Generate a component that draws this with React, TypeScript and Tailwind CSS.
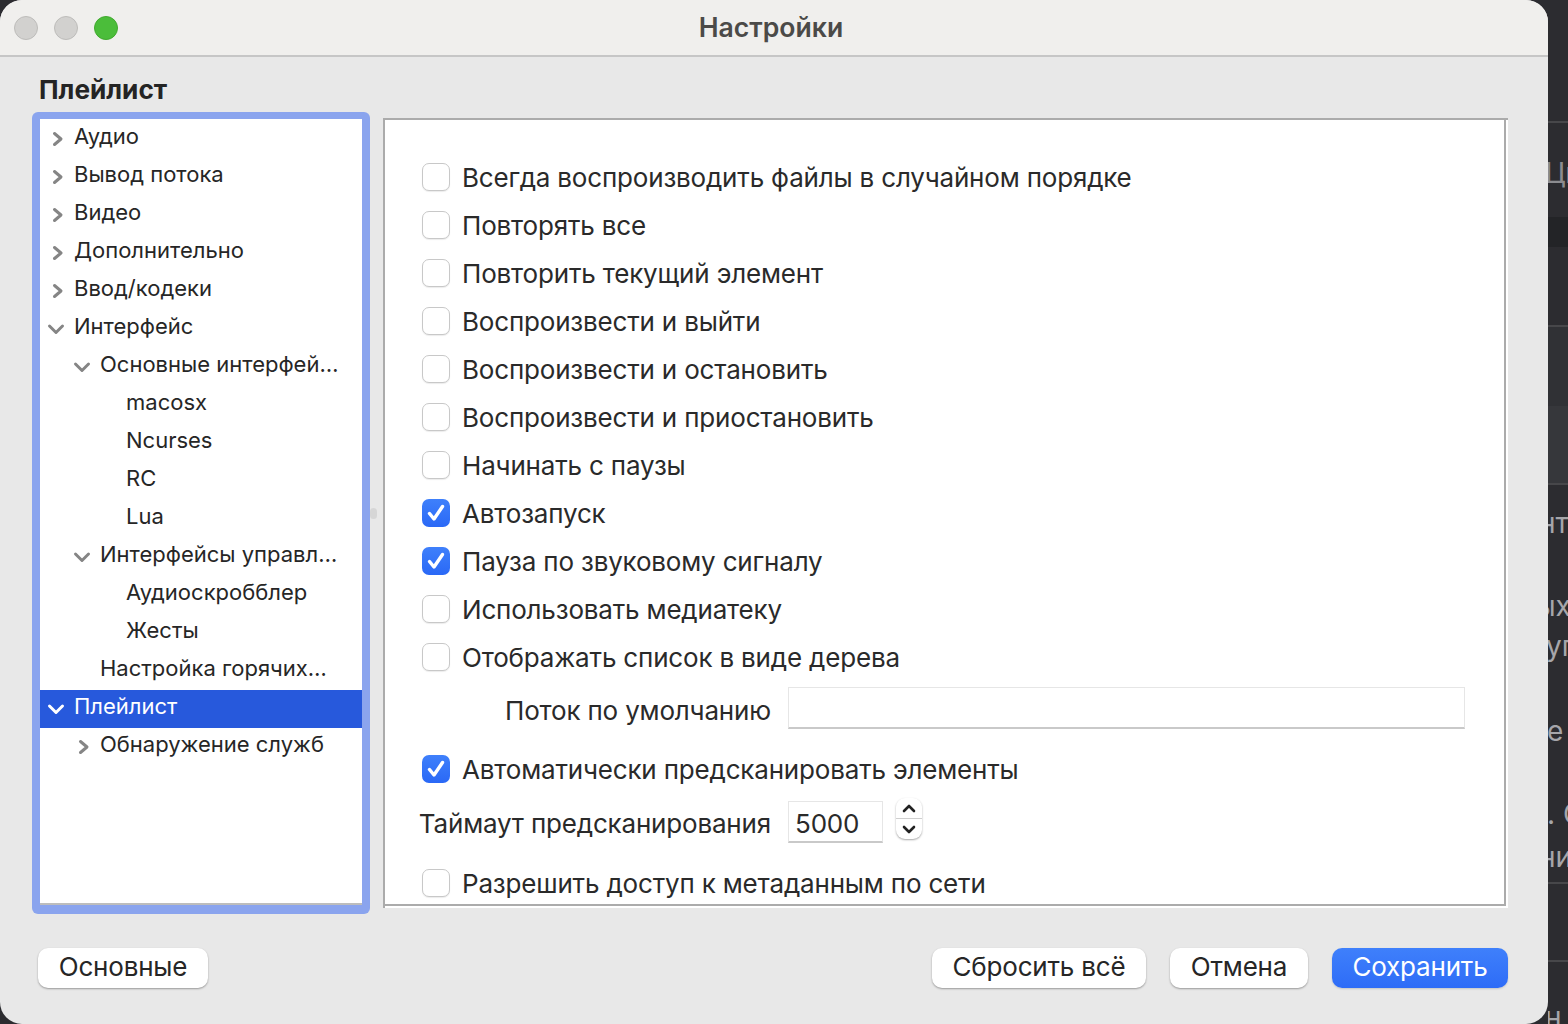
import React from "react";

function ChevronRight({ white = false }: { white?: boolean }) {
  return (
    <svg width="12" height="16" viewBox="0 0 12 16" fill="none" className="shrink-0">
      <path d="M2.5 2.5 L9 8 L2.5 13.5" stroke={white ? "#ffffff" : "#858585"} strokeWidth="3" strokeLinecap="round" strokeLinejoin="round" />
    </svg>
  );
}

function ChevronDown({ white = false }: { white?: boolean }) {
  return (
    <svg width="18" height="12" viewBox="0 0 18 12" fill="none" className="shrink-0">
      <path d="M2.5 3 L9 9.5 L15.5 3" stroke={white ? "#ffffff" : "#858585"} strokeWidth="3" strokeLinecap="round" strokeLinejoin="round" />
    </svg>
  );
}

type Row = { t: string; l: number; c?: "r" | "d"; sel?: boolean };
const rows: Row[] = [
  { t: "Аудио", l: 0, c: "r" },
  { t: "Вывод потока", l: 0, c: "r" },
  { t: "Видео", l: 0, c: "r" },
  { t: "Дополнительно", l: 0, c: "r" },
  { t: "Ввод/кодеки", l: 0, c: "r" },
  { t: "Интерфейс", l: 0, c: "d" },
  { t: "Основные интерфей…", l: 1, c: "d" },
  { t: "macosx", l: 2 },
  { t: "Ncurses", l: 2 },
  { t: "RC", l: 2 },
  { t: "Lua", l: 2 },
  { t: "Интерфейсы управл…", l: 1, c: "d" },
  { t: "Аудиоскробблер", l: 2 },
  { t: "Жесты", l: 2 },
  { t: "Настройка горячих…", l: 1 },
  { t: "Плейлист", l: 0, c: "d", sel: true },
  { t: "Обнаружение служб", l: 1, c: "r" },
];

function TreeRow({ r }: { r: Row }) {
  const pad = r.l === 0 ? "pl-0" : r.l === 1 ? "pl-[26px]" : "pl-[52px]";
  return (
    <div className={`h-[38px] flex items-center whitespace-nowrap ${pad} ${r.sel ? "bg-[#2759dc] text-white" : "text-[#262626]"}`}>
      <span className={`w-[34px] shrink-0 flex items-center ${r.c === "d" ? "pl-[7px]" : "pl-[12px]"}`}>
        {r.c === "r" && <ChevronRight white={r.sel} />}
        {r.c === "d" && <ChevronDown white={r.sel} />}
      </span>
      <span className="text-[22px] leading-[34px] pb-[6px]">{r.t}</span>
    </div>
  );
}

function Check({ on = false }: { on?: boolean }) {
  return on ? (
    <span className="w-[28px] h-[28px] rounded-[7px] shrink-0 bg-gradient-to-b from-[#3f80fb] to-[#2a68f6] flex items-center justify-center">
      <svg width="20" height="20" viewBox="0 0 20 20" fill="none">
        <path d="M3.5 10.5 L8 16 L16.5 3.5" stroke="#fff" strokeWidth="3.4" strokeLinecap="round" strokeLinejoin="round" />
      </svg>
    </span>
  ) : (
    <span className="w-[28px] h-[28px] rounded-[7px] shrink-0 bg-white border border-[#c8c8c8] shadow-[0_1px_1px_rgba(0,0,0,0.08)]" />
  );
}

function CheckRow({ t, on, cls = "" }: { t: string; on?: boolean; cls?: string }) {
  return (
    <div className={`h-[48px] flex items-center gap-[12px] pl-[37px] shrink-0 ${cls}`}>
      <Check on={on} />
      <span className="text-[26px] leading-[34px] tracking-[-0.18px] pt-[2px] text-[#2a2a2a] whitespace-nowrap">{t}</span>
    </div>
  );
}

function Btn({ t, w, primary }: { t: string; w: string; primary?: boolean }) {
  return (
    <button
      className={`${w} h-[40px] rounded-[10px] text-[26px] tracking-[-0.18px] leading-[36px] pb-[2px] flex items-center justify-center ${
        primary
          ? "bg-gradient-to-b from-[#3f80fb] to-[#2e6cf7] text-white shadow-[0_1px_2px_rgba(0,0,0,0.15)]"
          : "bg-white text-[#262626] shadow-[0_1px_2px_rgba(0,0,0,0.35)]"
      }`}
    >
      {t}
    </button>
  );
}

const opts1: [string, boolean?][] = [
  ["Всегда воспроизводить файлы в случайном порядке"],
  ["Повторять все"],
  ["Повторить текущий элемент"],
  ["Воспроизвести и выйти"],
  ["Воспроизвести и остановить"],
  ["Воспроизвести и приостановить"],
  ["Начинать с паузы"],
  ["Автозапуск", true],
  ["Пауза по звуковому сигналу", true],
  ["Использовать медиатеку"],
  ["Отображать список в виде дерева"],
];

export default function App() {
  return (
    <div className="w-[1568px] h-[1024px] bg-[#2c2c30] flex overflow-hidden [font-family:Inter,'Noto_Sans',sans-serif]">
      <div className="w-[1548px] h-[1024px] shrink-0 bg-[#e8e8e8] rounded-[22px] overflow-hidden flex flex-col">
        <div className="h-[57px] shrink-0 bg-[#f0efed] border-b-2 border-[#c6c6c6] flex items-center px-[14px]">
          <div className="flex gap-[16px]">
            <span className="w-[24px] h-[24px] rounded-full bg-[#d2d1cf] border border-[#bdbcba]" />
            <span className="w-[24px] h-[24px] rounded-full bg-[#d2d1cf] border border-[#bdbcba]" />
            <span className="w-[24px] h-[24px] rounded-full bg-[#4bbd3a] border border-[#41a92f]" />
          </div>
          <div className="flex-1 text-center text-[26.6px] font-semibold text-[#4b4a48] pr-[110px]">Настройки</div>
        </div>

        <div className="h-[55px] shrink-0 pl-[39px] pt-[10px] flex items-center text-[26.2px] font-bold text-[#242424]">Плейлист</div>

        <div className="h-[802px] shrink-0 flex pl-[32px]">
          <div className="w-[338px] h-[802px] shrink-0 bg-[#8aa4ee] rounded-[6px] p-[7px_8px_7px_8px]">
            <div className="w-[322px] h-[786px] bg-white border-b-2 border-[#bdbdbd] pt-[1px] overflow-hidden">
              {rows.map((r) => (
                <TreeRow key={r.t} r={r} />
              ))}
            </div>
          </div>
          <div className="w-[13px] shrink-0 flex items-center justify-center pr-[6px]">
            <span className="w-[11px] h-[11px] rounded-full bg-[#d6d6d6]" />
          </div>
          <div className="w-[1125px] h-[790px] mt-[6px] shrink-0 bg-white border-t-2 border-l-2 border-[#ababab] pr-[2px] pb-[2px]">
            <div className="h-full border-r-2 border-b-2 border-[#ababab] overflow-hidden pt-[33px]">
              {opts1.map(([t, on]) => (
                <CheckRow key={t} t={t} on={on} />
              ))}
              <div className="h-[44px] mt-[5px] flex items-center">
                <div className="w-[386px] shrink-0 text-right text-[26px] tracking-[-0.18px] pt-[4px] text-[#2a2a2a] whitespace-nowrap">Поток по умолчанию</div>
                <div className="ml-[17px] w-[677px] h-[42px] bg-white border border-[#e6e6e6] border-b-2 border-b-[#c9c9c9]" />
              </div>
              <CheckRow t="Автоматически предсканировать элементы" on cls="mt-[15px]" />
              <div className="h-[44px] mt-[7px] flex items-center">
                <div className="w-[386px] shrink-0 text-right text-[26px] tracking-[-0.18px] pt-[2px] text-[#2a2a2a] whitespace-nowrap">Таймаут предсканирования</div>
                <div className="ml-[17px] w-[95px] h-[42px] bg-white border border-[#e6e6e6] border-b-2 border-b-[#c9c9c9] text-[26px] tracking-[-0.18px] text-[#2a2a2a] pl-[6px] leading-[44px]">
                  5000
                </div>
                <div className="ml-[13px] w-[26px] h-[41px] mb-[7px] bg-white rounded-[9px] shadow-[0_1px_2px_rgba(0,0,0,0.35)] flex flex-col">
                  <span className="h-[21px] flex items-center justify-center border-b border-[#cfcfcf]">
                    <svg width="14" height="9" viewBox="0 0 14 9" fill="none">
                      <path d="M2 7 L7 2 L12 7" stroke="#222" strokeWidth="2.6" strokeLinecap="round" strokeLinejoin="round" />
                    </svg>
                  </span>
                  <span className="h-[20px] flex items-center justify-center">
                    <svg width="14" height="9" viewBox="0 0 14 9" fill="none">
                      <path d="M2 2 L7 7 L12 2" stroke="#222" strokeWidth="2.6" strokeLinecap="round" strokeLinejoin="round" />
                    </svg>
                  </span>
                </div>
              </div>
              <CheckRow t="Разрешить доступ к метаданным по сети" cls="mt-[15px]" />
            </div>
          </div>
        </div>

        <div className="mt-[34px] flex pl-[38px] pr-[40px]">
          <Btn t="Основные" w="w-[170px]" />
          <div className="flex-1" />
          <div className="flex gap-[24px]">
            <Btn t="Сбросить всё" w="w-[214px]" />
            <Btn t="Отмена" w="w-[138px]" />
            <Btn t="Сохранить" w="w-[176px]" primary />
          </div>
        </div>
      </div>

      <div className="w-[20px] shrink-0 h-[1024px] overflow-hidden text-[#a6a6aa] text-[28px] leading-[34px] whitespace-nowrap flex flex-col">
        <div className="h-[121px] shrink-0" />
        <div className="h-[2px] shrink-0 bg-[#47474a]" />
        <div className="h-[33px] shrink-0" />
        <div className="h-[34px] shrink-0 -ml-[3px] text-[#8c8c90]">Ци</div>
        <div className="h-[27px] shrink-0" />
        <div className="h-[30px] shrink-0 bg-[#232427]" />
        <div className="h-[78px] shrink-0" />
        <div className="h-[2px] shrink-0 bg-[#47474a]" />
        <div className="h-[79px] shrink-0 bg-[#303135]" />
        <div className="h-[77px] shrink-0 bg-[#36373b]" />
        <div className="h-[2px] shrink-0 bg-[#47474a]" />
        <div className="h-[21px] shrink-0" />
        <div className="h-[34px] shrink-0 -ml-[9px]">нт</div>
        <div className="h-[49px] shrink-0" />
        <div className="h-[34px] shrink-0 -ml-[13px]">ых</div>
        <div className="h-[6px] shrink-0" />
        <div className="h-[34px] shrink-0 -ml-[2px]">уг</div>
        <div className="h-[51px] shrink-0" />
        <div className="h-[34px] shrink-0 -ml-[1px]">е</div>
        <div className="h-[49px] shrink-0" />
        <div className="h-[34px] shrink-0 -ml-[1px]">. С</div>
        <div className="h-[9px] shrink-0" />
        <div className="h-[34px] shrink-0 -ml-[9px]">ни</div>
        <div className="h-[8px] shrink-0" />
        <div className="h-[2px] shrink-0 bg-[#47474a]" />
        <div className="h-[76px] shrink-0" />
        <div className="h-[2px] shrink-0 bg-[#47474a]" />
        <div className="h-[72px] shrink-0 -ml-[3px] pt-[38px]">н</div>
      </div>
    </div>
  );
}
